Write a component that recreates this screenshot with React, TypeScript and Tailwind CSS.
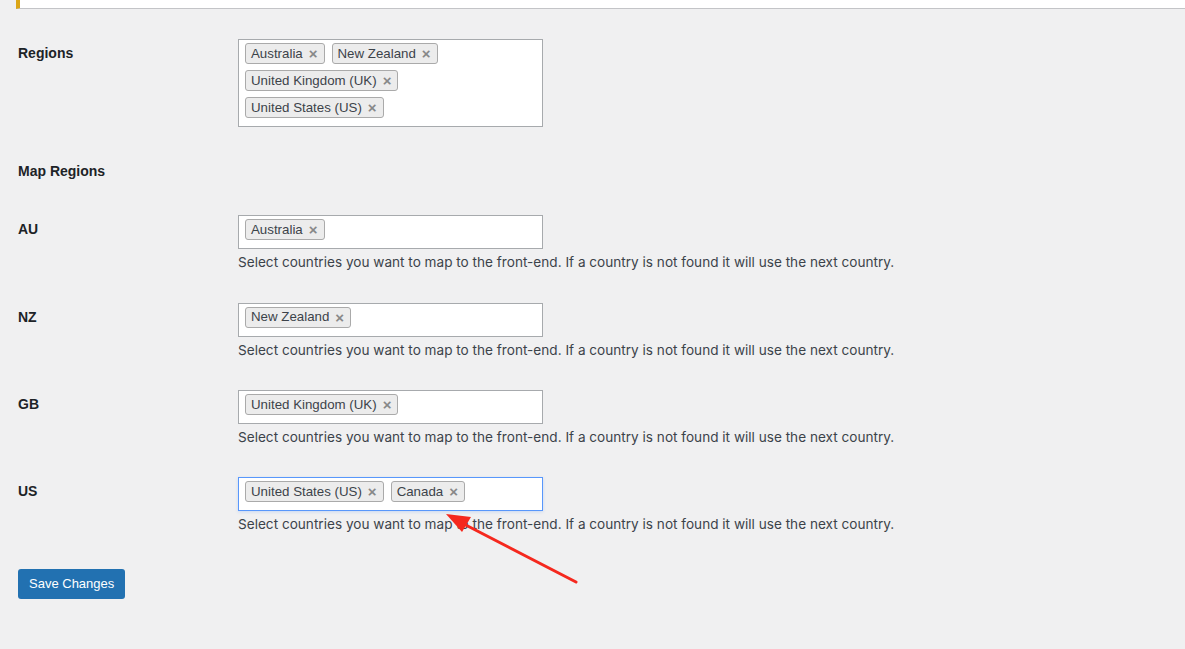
import React from 'react';

type Row = { code: string; tags: string[]; focused?: boolean };

const rows: Row[] = [
    { code: 'AU', tags: ['Australia'] },
    { code: 'NZ', tags: ['New Zealand'] },
    { code: 'GB', tags: ['United Kingdom (UK)'] },
    { code: 'US', tags: ['United States (US)', 'Canada'], focused: true },
];

const Tag = ({ label }: { label: string }) => (
    <span className="flex h-[21px] items-center rounded-[3px] border border-[#aaaaaa] bg-[#ececec] pl-[5px] pr-[6px] text-[13.3px] leading-none text-[#3c434a]">
        {label}
        <span className="ml-[6px] text-[15px] font-bold leading-none text-[#888888]">×</span>
    </span>
);

const TagBox = ({ tags, focused }: { tags: string[][]; focused?: boolean }) => (
    <div
        className={`flex w-[305px] flex-col gap-y-[6px] border bg-white pb-[8px] pl-[6px] pt-[3px] ${
            focused ? 'border-[#5897fb] shadow-[0_1px_3px_rgba(88,151,251,0.25)]' : 'border-[#a7aaad]'
        }`}
    >
        {tags.map((line, i) => (
            <div key={i} className="flex gap-x-[7px]">
                {line.map((t) => (
                    <Tag key={t} label={t} />
                ))}
            </div>
        ))}
    </div>
);

const Label = ({ children }: { children: React.ReactNode }) => (
    <div className="w-[220px] shrink-0 py-[20px] text-[14px] font-semibold leading-[1.3] text-[#1d2327]">{children}</div>
);

export default function App() {
    return (
        <div
            className="relative min-h-screen bg-[#f0f0f1] text-[#3c434a]"
            style={{ fontFamily: '"Liberation Sans", Arial, sans-serif' }}
        >
            <div className="ml-[16px] h-[9px] border-b border-l-4 border-b-[#c3c4c7] border-l-[#dba617] bg-white" />

            <div className="px-[18px] pt-[15px]">
                <div className="flex">
                    <Label>Regions</Label>
                    <div className="py-[15px]">
                        <TagBox
                            tags={[['Australia', 'New Zealand'], ['United Kingdom (UK)'], ['United States (US)']]}
                        />
                    </div>
                </div>

                <div className="flex">
                    <Label>Map Regions</Label>
                </div>

                {rows.map((r) => (
                    <div key={r.code} className="flex">
                        <Label>{r.code}</Label>
                        <div className="py-[15px]">
                            <TagBox tags={[r.tags]} focused={r.focused} />
                            <p className="mt-[4px] font-['Inter',sans-serif] text-[13.6px] leading-[19.35px] text-[#3c434a]">
                                Select countries you want to map to the front-end. If a country is not found it will use
                                the next country.
                            </p>
                        </div>
                    </div>
                ))}

                <div className="pt-[19px]">
                    <button className="h-[30px] rounded-[3px] bg-[#2271b1] px-[11px] text-[13px] text-white">
                        Save Changes
                    </button>
                </div>
            </div>

            <svg className="pointer-events-none absolute left-0 top-0" width="1185" height="649">
                <line x1="576" y1="582" x2="458" y2="521" stroke="#f5281e" strokeWidth="3" strokeLinecap="round" />
                <polygon points="446,514 471,517 462,532" fill="#f5281e" />
            </svg>
        </div>
    );
}
